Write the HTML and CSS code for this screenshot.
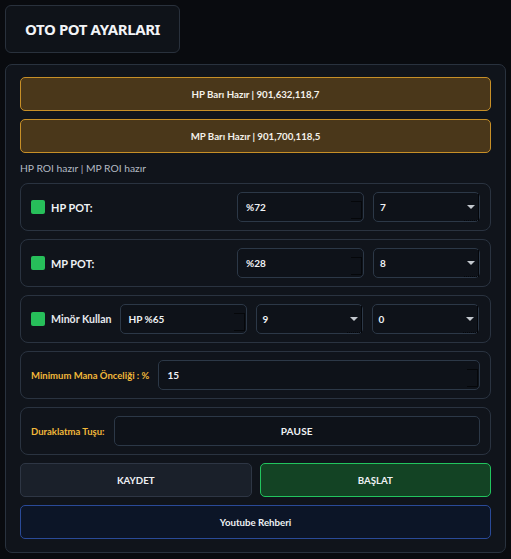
FILE: index.html
```html
<!DOCTYPE html>
<html lang="tr">
<head>
<meta charset="utf-8">
<title>OTO POT AYARLARI</title>
<link rel="stylesheet" href="styles.css">
</head>
<body>
<div class="app">
  <div class="title-box">OTO POT AYARLARI</div>
  <div class="panel">
    <div class="bar">HP Barı Hazır | 901,632,118,7</div>
    <div class="bar">MP Barı Hazır | 901,700,118,5</div>
    <div class="roi">HP ROI hazır | MP ROI hazır</div>

    <div class="row">
      <span class="check"></span>
      <span class="label bold">HP POT:</span>
      <div class="spin w127 push">%72</div>
      <div class="select w107">7</div>
    </div>

    <div class="row">
      <span class="check"></span>
      <span class="label bold">MP POT:</span>
      <div class="spin w127 push">%28</div>
      <div class="select w107">8</div>
    </div>

    <div class="row">
      <span class="check"></span>
      <span class="label semi">Minör Kullan</span>
      <div class="spin w127 light">HP %65</div>
      <div class="select w107">9</div>
      <div class="select w107">0</div>
    </div>

    <div class="row">
      <span class="label orange">Minimum Mana Önceliği : %</span>
      <div class="spin grow light">15</div>
    </div>

    <div class="row">
      <span class="label orange">Duraklatma Tuşu:</span>
      <div class="keybtn grow">PAUSE</div>
    </div>

    <div class="btn-row">
      <div class="btn save">KAYDET</div>
      <div class="btn start">BAŞLAT</div>
    </div>
    <div class="btn yt">Youtube Rehberi</div>
  </div>
</div>
</body>
</html>
```

FILE: styles.css
```css
* { box-sizing: border-box; }
html, body { margin: 0; padding: 0; }
body {
  background: #090b0f;
  font-family: "Lato", "Noto Sans", sans-serif;
  color: #e9edf2;
  width: 511px;
  height: 559px;
  overflow: hidden;
}
.app {
  padding: 5px;
  display: flex;
  flex-direction: column;
  gap: 11px;
}
.title-box {
  width: 175px;
  height: 48px;
  border: 1px solid #29313c;
  border-radius: 6px;
  background: #0f1319;
  display: flex;
  align-items: center;
  justify-content: center;
  font-family: "Noto Sans", sans-serif;
  font-weight: 700;
  font-size: 15px;
  color: #f2f4f7;
  letter-spacing: -0.4px;
}
.panel {
  width: 501px;
  height: 489px;
  border: 1px solid #29323e;
  border-radius: 7px;
  background: #10141b;
  padding: 12px 14px 13px 14px;
  display: flex;
  flex-direction: column;
  gap: 8px;
}
.bar {
  height: 34px;
  background: #4a371a;
  border: 1px solid #c78f27;
  border-radius: 5px;
  display: flex;
  align-items: center;
  justify-content: center;
  font-weight: 700;
  font-size: 9.7px;
  color: #f4f1ea;
}
.roi {
  height: 14px;
  line-height: 14px;
  font-size: 10.3px;
  color: #b3bac3;
}
.row {
  height: 48px;
  border: 1px solid #2a3340;
  border-radius: 8px;
  padding: 0 10px;
  display: flex;
  align-items: center;
  gap: 9px;
}
.check {
  width: 14px;
  height: 14px;
  background: #27bf5a;
  border-radius: 2px;
  flex: none;
  margin-right: -3px;
}
.label {
  font-size: 10.9px;
  white-space: nowrap;
  margin-right: -1px;
}
.bold { font-weight: 700; color: #eef1f4; }
.semi { font-weight: 700; color: #e6e9ee; font-size: 10.6px; }
.orange { font-weight: 700; color: #f2b83a; font-size: 9.5px; margin-right: 0; }
.spin, .select, .keybtn {
  height: 30px;
  border: 1px solid #2c3847;
  border-radius: 5px;
  background: #0e1219;
  display: flex;
  align-items: center;
  font-size: 10px;
  font-weight: 700;
  color: #eef1f4;
  position: relative;
  flex: none;
}
.spin { padding-left: 8px; }
.spin::after {
  content: "";
  position: absolute;
  right: 1px;
  top: 8px;
  width: 10px;
  height: 16px;
  border-top: 1px solid #05070a;
  border-bottom: 1px solid #05070a;
  border-right: 1px solid #05070a;
}
.select { padding-left: 6px; }
.select::before {
  content: "";
  position: absolute;
  right: 4px;
  top: 12px;
  border-left: 4px solid transparent;
  border-right: 4px solid transparent;
  border-top: 4px solid #c3c8ce;
}
.select::after {
  content: "";
  position: absolute;
  right: 0;
  bottom: 0;
  width: 14px;
  height: 26px;
  border-bottom: 1px dotted #04060a;
  border-right: 1px solid #04060a;
}
.w127 { width: 127px; }
.w107 { width: 107px; }
.push { margin-left: auto; }
.grow { flex: 1; }
.keybtn {
  justify-content: center;
  letter-spacing: 0.2px;
}
.btn-row {
  display: flex;
  gap: 8px;
}
.btn {
  height: 34px;
  border-radius: 5px;
  display: flex;
  align-items: center;
  justify-content: center;
  font-size: 9.7px;
  font-weight: 700;
  color: #eef1f4;
}
.btn-row .btn { flex: 1; }
.save { background: #1a202a; border: 1px solid #2e3644; }
.start { background: #134324; border: 1px solid #22c55e; }
.yt { background: #0c1527; border: 1px solid #2a4a98; }
```
